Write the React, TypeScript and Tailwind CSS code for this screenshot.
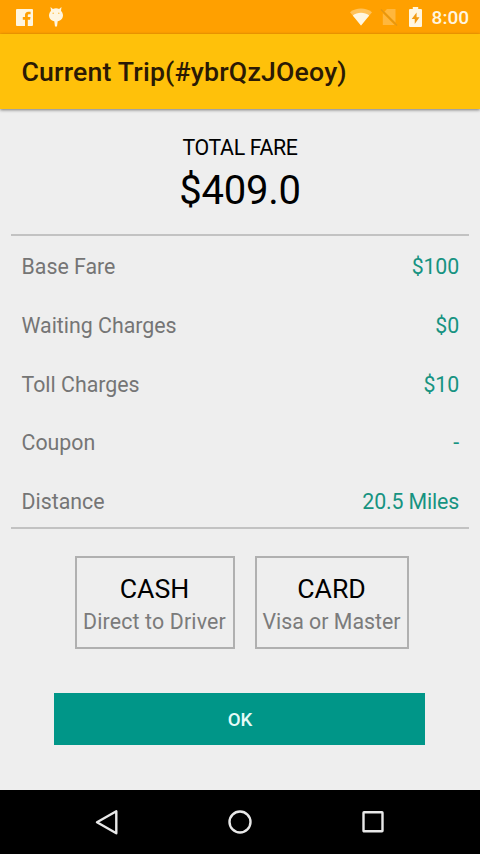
const fares = [
  { label: "Base Fare", value: "$100" },
  { label: "Waiting Charges", value: "$0" },
  { label: "Toll Charges", value: "$10" },
  { label: "Coupon", value: "-" },
  { label: "Distance", value: "20.5 Miles" },
];

const methods = [
  { name: "CASH", note: "Direct to Driver", width: "w-[160px]", tracking: "tracking-[0.160px]" },
  { name: "CARD", note: "Visa or Master", width: "w-[154px]", tracking: "tracking-normal" },
];

const StatusBar = () => (
  <div className="h-[34px] shrink-0 bg-[#ffa000] flex items-center justify-between pl-4 pr-[11px] text-[#fff6e0]">
    <div className="flex items-center gap-[15px]">
      {/* Facebook */}
      <svg width="17" height="17" viewBox="0 0 17 17">
        <path
          fill="currentColor"
          d="M1 0h15a1 1 0 0 1 1 1v15a1 1 0 0 1-1 1h-4.200v-6.300h2.300l.4-2.700h-2.700V6.400c0-.8.4-1.200 1.300-1.200h1.500V2.700h-2.200C10.200 2.700 9 4 9 6.100V8H6.800v2.700H9V17H1a1 1 0 0 1-1-1V1a1 1 0 0 1 1-1z"
        />
      </svg>
      {/* Android debug */}
      <svg width="16" height="20" viewBox="0 0 16 20">
        <path
          fill="currentColor"
          d="M2.500 0l2.400 1.900A7 7 0 0 1 8 1.200a7 7 0 0 1 3.100.7L13.500 0l-.5 3.700A6.800 6.800 0 0 1 15 8c0 3.600-2.300 5.700-5.300 6.300L9 19.500H7l-.7-5.200C3.300 13.700 1 11.600 1 8a6.800 6.800 0 0 1 2-4.300z"
        />
        <circle cx="5.200" cy="6.300" r="0.800" fill="#ffc04d" />
        <circle cx="10.800" cy="6.300" r="0.800" fill="#ffc04d" />
      </svg>
    </div>
    <div className="flex items-center">
      {/* Wi-Fi */}
      <svg width="22" height="18" viewBox="0 0 22 18">
        <path fill="currentColor" opacity="0.4" d="M11 17.500L0 4.200C3 1.800 7 .5 11 .5s8 1.300 11 3.700z" />
        <path fill="currentColor" d="M11 17.500L2.800 7.500C5 5.700 8 4.700 11 4.700s6 1 8.200 2.800z" />
      </svg>
      {/* No SIM */}
      <svg className="ml-[8px]" width="18" height="18" viewBox="0 0 18 18">
        <path fill="currentColor" opacity="0.27" d="M7 1h8.500v13.500L4.500 3.500zM2.800 5.200L14.600 17H2.800z" />
        <path stroke="#d9931c" strokeWidth="1.200" opacity="0.8" d="M1 1.500l16 16" />
      </svg>
      {/* Charging battery */}
      <svg className="ml-[11px]" width="13" height="20" viewBox="0 0 12 20" preserveAspectRatio="none">
        <path fill="currentColor" d="M3.500 0h5v2H11a1 1 0 0 1 1 1v16a1 1 0 0 1-1 1H1a1 1 0 0 1-1-1V3a1 1 0 0 1 1-1h2.500z" />
        <path fill="#f29a10" d="M7 5.500L2.500 12H5.300v5L9.700 10.200H7z" />
      </svg>
      <span className="ml-[10px] text-[19px] leading-none font-medium">8:00</span>
    </div>
  </div>
);

const NavBar = () => (
  <div className="h-[64px] shrink-0 bg-black flex justify-between items-center px-[94px]">
    <svg width="25" height="28" viewBox="0 0 25 28" fill="none" stroke="#e8e8e8" strokeWidth="2.400">
      <path strokeLinejoin="round" d="M22.300 3.300v22L3 14.300z" />
    </svg>
    <svg width="26" height="26" viewBox="0 0 26 26" fill="none" stroke="#e8e8e8" strokeWidth="2.400">
      <circle cx="13" cy="13" r="10.500" />
    </svg>
    <svg width="26" height="26" viewBox="0 0 26 26" fill="none" stroke="#e8e8e8" strokeWidth="2.400">
      <rect x="3.500" y="3.300" width="19" height="19" rx="0.500" />
    </svg>
  </div>
);

const App = () => {
  return (
    <div className="w-[480px] h-[854px] bg-[#eeeeee] flex flex-col overflow-hidden font-[Roboto,sans-serif]">
      <StatusBar />
      <header className="h-[75px] shrink-0 bg-[#ffc10a] flex items-center pl-[21.500px] shadow-[0_1px_3px_rgba(0,0,0,0.5)]">
        <h1 className="text-[26.670px] font-medium tracking-[0.190px] text-[#2b1a05]">
          Current Trip(#ybrQzJOeoy)
        </h1>
      </header>

      <main className="flex-1 flex flex-col px-[11px]">
        <div className="h-[125px] pt-[26px] flex flex-col items-center text-black">
          <p className="text-[21.330px] leading-[25px] tracking-[-0.350px]">TOTAL FARE</p>
          <p className="mt-[7px] text-[40px] leading-[47px] tracking-[-0.250px]">$409.0</p>
        </div>

        <ul className="h-[295px] border-y-2 border-[#c2c2c2] pl-[10.500px] pr-[10px] pt-[2px]">
          {fares.map((fare) => (
            <li
              key={fare.label}
              className="h-[58.670px] flex items-center justify-between text-[21.330px]"
            >
              <span className="text-[#757575]">{fare.label}</span>
              <span className="text-[#169381] tracking-[-0.150px]">{fare.value}</span>
            </li>
          ))}
        </ul>

        <div className="mt-[27px] ml-[3px] flex justify-center gap-[20px]">
          {methods.map((method) => (
            <button
              key={method.name}
              className={`${method.width} h-[93px] border-2 border-[#b0b0b0] flex flex-col items-center pt-[16px]`}
            >
              <span className="text-[26.670px] leading-[31px] text-black">{method.name}</span>
              <span
                className={`mt-[4px] text-[21.330px] leading-[25px] text-[#7b7b7b] whitespace-nowrap ${method.tracking}`}
              >
                {method.note}
              </span>
            </button>
          ))}
        </div>

        <button className="mt-[44px] ml-[43px] mr-[44px] h-[52px] pt-[2px] pl-[1px] bg-[#009688] text-[#e6fbf8] text-[18.670px] font-medium">
          OK
        </button>
      </main>

      <NavBar />
    </div>
  );
};

export default App;
